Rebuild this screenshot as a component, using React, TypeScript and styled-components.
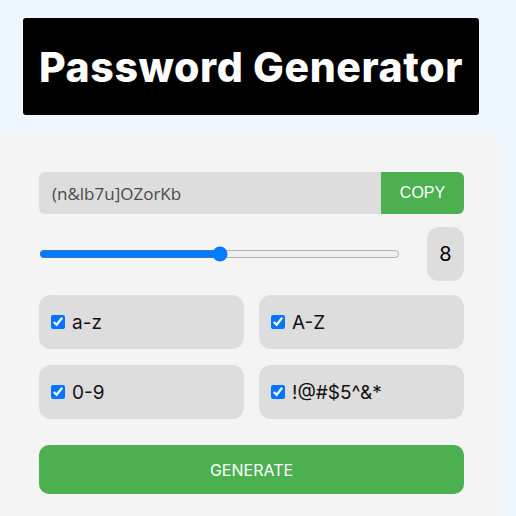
import React, { useState } from 'react';
import styled, { createGlobalStyle } from 'styled-components';

const GlobalStyle = createGlobalStyle`
  html, body {
    margin: 0;
    padding: 0;
    background: #eef6ff;
    font-family: 'Inter', 'Liberation Sans', sans-serif;
  }
  * {
    box-sizing: border-box;
  }
`;

const OPTIONS = [
  { id: 'lower', label: 'a-z' },
  { id: 'upper', label: 'A-Z' },
  { id: 'digits', label: '0-9' },
  { id: 'symbols', label: '!@#$5^&*' },
];

const App = () => {
  const [length, setLength] = useState(8);
  const [checked, setChecked] = useState<Record<string, boolean>>({
    lower: true,
    upper: true,
    digits: true,
    symbols: true,
  });

  return (
    <Page>
      <GlobalStyle />
      <Header>
        <Title>Password Generator</Title>
      </Header>
      <Card>
        <PasswordRow>
          <PasswordField readOnly value="(n&lb7u]OZorKb" />
          <CopyButton>COPY</CopyButton>
        </PasswordRow>
        <LengthRow>
          <Range
            type="range"
            min={4}
            max={12}
            value={length}
            onChange={(e) => setLength(Number(e.target.value))}
          />
          <LengthValue>{length}</LengthValue>
        </LengthRow>
        <OptionGrid>
          {OPTIONS.map((opt) => (
            <Option key={opt.id}>
              <Check
                type="checkbox"
                checked={checked[opt.id]}
                onChange={() =>
                  setChecked((prev) => ({ ...prev, [opt.id]: !prev[opt.id] }))
                }
              />
              <OptionLabel>{opt.label}</OptionLabel>
            </Option>
          ))}
        </OptionGrid>
        <GenerateButton>GENERATE</GenerateButton>
      </Card>
    </Page>
  );
};

const Page = styled.div`
  display: flex;
  flex-direction: column;
  width: 500px;
  padding-top: 18px;
`;

const Header = styled.div`
  display: flex;
  align-items: center;
  justify-content: center;
  width: 456px;
  height: 97px;
  margin-left: 23px;
  background: #000;
  border-radius: 3px;
`;

const Title = styled.h1`
  margin: 0;
  color: #fff;
  font-size: 41px;
  font-weight: 800;
  letter-spacing: 0.6px;
`;

const Card = styled.div`
  display: flex;
  flex-direction: column;
  margin-top: 19px;
  padding: 38px 36px 40px 39px;
  background: #f4f4f4;
  border-radius: 8px;
`;

const PasswordRow = styled.div`
  display: flex;
  height: 42px;
`;

const PasswordField = styled.input`
  flex: 1;
  min-width: 0;
  padding: 0 13px;
  border: none;
  outline: none;
  background: #dddddd;
  border-radius: 6px 0 0 6px;
  color: #4a4a4a;
  font-family: 'Open Sans', sans-serif;
  font-size: 17px;
`;

const CopyButton = styled.button`
  width: 83px;
  border: none;
  background: #4caf50;
  color: #fff;
  border-radius: 0 6px 6px 0;
  font-family: 'Liberation Sans', sans-serif;
  font-size: 16px;
`;

const LengthRow = styled.div`
  display: flex;
  align-items: center;
  justify-content: space-between;
  margin-top: 13px;
`;

const Range = styled.input`
  width: 361px;
  margin: 0;
  accent-color: #007bff;
`;

const LengthValue = styled.div`
  display: flex;
  align-items: center;
  justify-content: center;
  width: 37px;
  height: 54px;
  background: #dddddd;
  border-radius: 12px;
  font-size: 20px;
  color: #000;
`;

const OptionGrid = styled.div`
  display: grid;
  grid-template-columns: 1fr 1fr;
  column-gap: 15px;
  row-gap: 16px;
  margin-top: 14px;
`;

const Option = styled.label`
  display: flex;
  align-items: center;
  gap: 7px;
  height: 54px;
  padding: 0 12px;
  background: #dddddd;
  border-radius: 12px;
`;

const Check = styled.input`
  width: 14px;
  height: 14px;
  margin: 0;
`;

const OptionLabel = styled.span`
  font-size: 19px;
  color: #111;
`;

const GenerateButton = styled.button`
  height: 49px;
  margin-top: 26px;
  border: none;
  background: #4caf50;
  color: #fff;
  border-radius: 10px;
  font-family: 'Inter', sans-serif;
  font-size: 16px;
`;

export default App;
